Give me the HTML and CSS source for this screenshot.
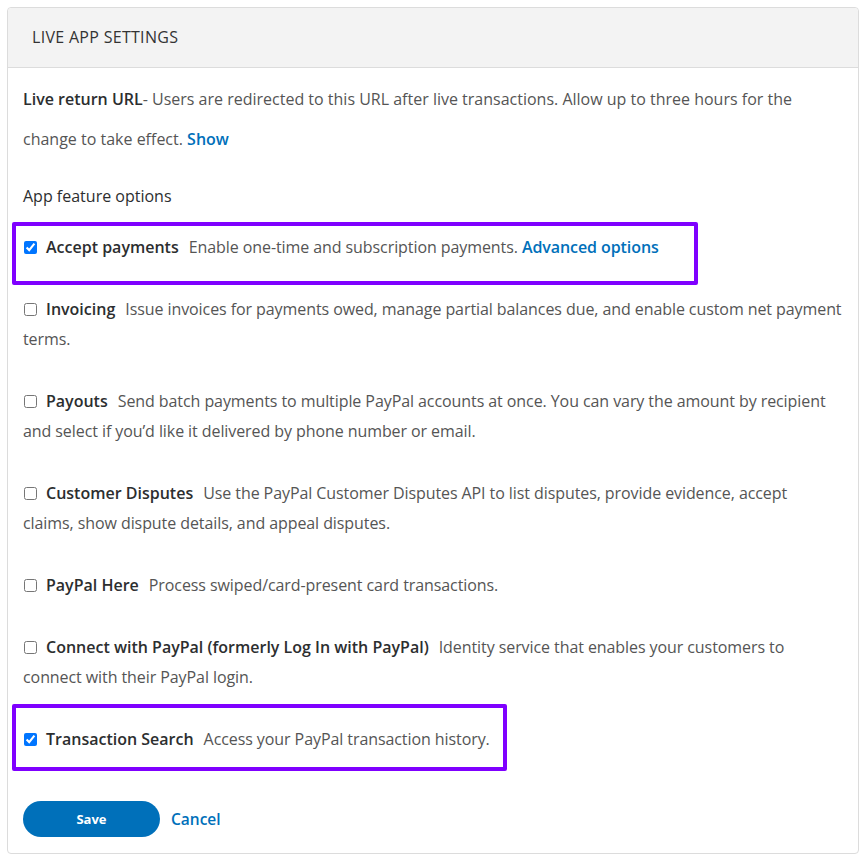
FILE: index.html
```html
<!DOCTYPE html>
<html>
<head>
<meta charset="utf-8">
<link rel="stylesheet" href="styles.css">
</head>
<body>
<div class="card">
  <div class="card-header">LIVE APP SETTINGS</div>
  <div class="card-body">
    <p class="intro"><strong>Live return URL</strong>- Users are redirected to this URL after live transactions. Allow up to three hours for the change to take effect. <a class="link" href="#">Show</a></p>
    <h3 class="section-title">App feature options</h3>
    <div class="feature highlight hl-1">
      <input type="checkbox" checked><span class="name">Accept payments</span><span class="desc">Enable one-time and subscription payments. <a class="link" href="#">Advanced options</a></span>
    </div>
    <div class="feature">
      <input type="checkbox"><span class="name">Invoicing</span><span class="desc">Issue invoices for payments owed, manage partial balances due, and enable custom net payment terms.</span>
    </div>
    <div class="feature">
      <input type="checkbox"><span class="name">Payouts</span><span class="desc">Send batch payments to multiple PayPal accounts at once. You can vary the amount by recipient and select if you’d like it delivered by phone number or email.</span>
    </div>
    <div class="feature">
      <input type="checkbox"><span class="name">Customer Disputes</span><span class="desc">Use the PayPal Customer Disputes API to list disputes, provide evidence, accept<br>claims, show dispute details, and appeal disputes.</span>
    </div>
    <div class="feature">
      <input type="checkbox"><span class="name">PayPal Here</span><span class="desc">Process swiped/card-present card transactions.</span>
    </div>
    <div class="feature">
      <input type="checkbox"><span class="name">Connect with PayPal (formerly Log In with PayPal)</span><span class="desc">Identity service that enables your customers to<br>connect with their PayPal login.</span>
    </div>
    <div class="feature highlight hl-2">
      <input type="checkbox" checked><span class="name">Transaction Search</span><span class="desc">Access your PayPal transaction history.</span>
    </div>
    <div class="actions">
      <button class="btn-save">Save</button>
      <a class="link cancel" href="#">Cancel</a>
    </div>
  </div>
</div>
</body>
</html>
```
FILE: styles.css
```css
html, body {
  margin: 0;
  padding: 0;
  background: #fff;
}
body {
  padding: 7px 9px 7px 7px;
  font-family: "Open Sans", "Noto Sans", sans-serif;
  font-size: 16px;
  color: #2c2e2f;
}
.card {
  border: 1px solid #dcdcdc;
  border-radius: 4px;
}
.card-header {
  background: #f3f3f3;
  border-bottom: 1px solid #dcdcdc;
  border-radius: 4px 4px 0 0;
  height: 59px;
  line-height: 59px;
  padding-left: 24px;
  font-size: 16px;
  color: #333;
  letter-spacing: 0.3px;
}
.card-body {
  padding: 11px 10px 16px 15px;
}
.intro {
  margin: 0;
  line-height: 40px;
  color: #555;
}
.intro strong {
  color: #2c2e2f;
  font-weight: 600;
}
.link {
  color: #0070ba;
  font-weight: 600;
  text-decoration: none;
}
.section-title {
  margin: 22px 0 21px;
  font-size: 16px;
  font-weight: 500;
  line-height: 30px;
  color: #2c2e2f;
}
.feature {
  position: relative;
  line-height: 30px;
  margin-bottom: 32px;
  color: #555;
}
.feature .desc {
  letter-spacing: -0.08px;
}
.feature input {
  width: 13px;
  height: 13px;
  margin: 0 9px 0 1px;
  vertical-align: -1px;
}
.feature .name {
  font-weight: 600;
  color: #2c2e2f;
  margin-right: 10px;
}
.highlight::after {
  content: "";
  position: absolute;
  border: 4px solid #7f00ff;
  border-radius: 2px;
  pointer-events: none;
}
.hl-1::after {
  left: -11px;
  top: -10px;
  width: 678px;
  height: 55px;
}
.hl-2::after {
  left: -11px;
  top: -20px;
  width: 487px;
  height: 59px;
}
.feature.hl-2 {
  margin-bottom: 47px;
}
.actions {
  display: flex;
  align-items: center;
  gap: 11px;
}
.btn-save {
  width: 137px;
  height: 36px;
  border: none;
  border-radius: 18px;
  background: #0070ba;
  color: #fff;
  font-family: "Open Sans", sans-serif;
  font-size: 13px;
  font-weight: 700;
  padding: 0;
}
.cancel {
  font-size: 15.5px;
}
```
